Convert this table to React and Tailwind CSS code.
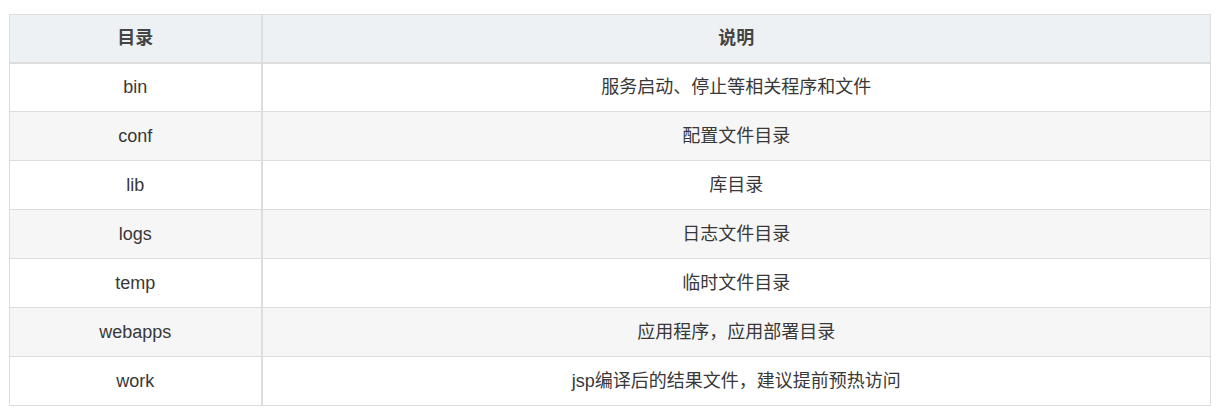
import React from 'react';

const rows = [
    { dir: 'bin', desc: '服务启动、停止等相关程序和文件' },
    { dir: 'conf', desc: '配置文件目录' },
    { dir: 'lib', desc: '库目录' },
    { dir: 'logs', desc: '日志文件目录' },
    { dir: 'temp', desc: '临时文件目录' },
    { dir: 'webapps', desc: '应用程序，应用部署目录' },
    { dir: 'work', desc: 'jsp编译后的结果文件，建议提前预热访问' },
];

export default function App() {
    return (
        <div className="bg-white w-[1217px] h-[415px] pt-[14px] pl-[9px] font-['Liberation_Sans','Noto_Sans_CJK_SC',sans-serif] text-[18px]">
            <table className="table-fixed border-collapse w-[1202px] border border-[#dddddd]">
                <colgroup>
                    <col className="w-[252px]" />
                    <col />
                </colgroup>
                <thead>
                    <tr className="bg-[#eef1f4] text-[#444] font-bold">
                        <th className="h-[48px] border-b-2 border-r-2 border-[#dddddd] text-center align-middle">目录</th>
                        <th className="h-[48px] border-b-2 border-[#dddddd] text-center align-middle">说明</th>
                    </tr>
                </thead>
                <tbody>
                    {rows.map((row, i) => (
                        <tr key={row.dir} className={i % 2 === 1 ? 'bg-[#f6f6f6]' : 'bg-white'}>
                            <td className="h-[49px] border-t border-r-2 border-[#dddddd] text-center align-middle text-[#383838]">{row.dir}</td>
                            <td className="h-[49px] border-t border-[#dddddd] text-center align-middle text-[#383838]">{row.desc}</td>
                        </tr>
                    ))}
                </tbody>
            </table>
        </div>
    );
}
